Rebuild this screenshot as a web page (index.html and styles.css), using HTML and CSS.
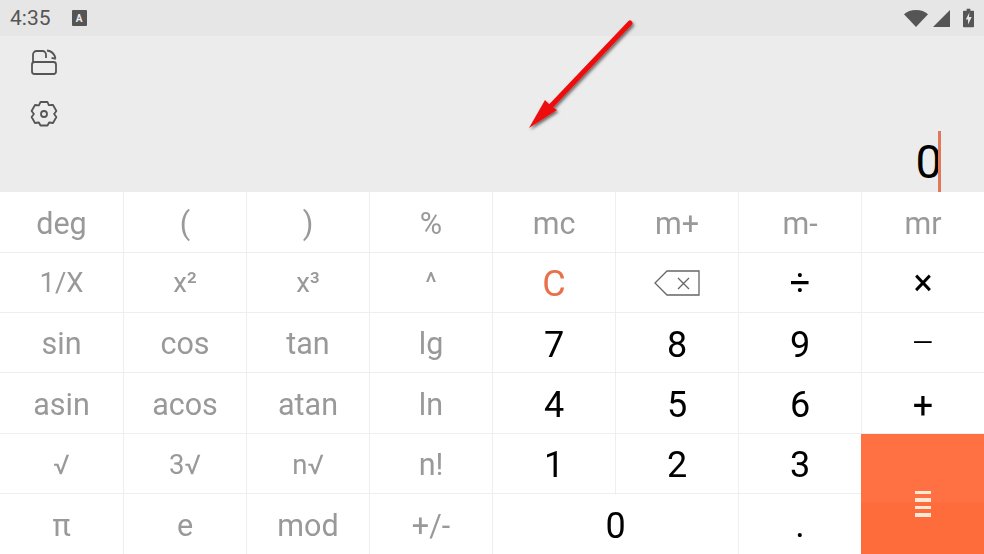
FILE: index.html
```html
<!DOCTYPE html>
<html lang="en">
<head>
<meta charset="utf-8">
<title>Calculator</title>
<link rel="stylesheet" href="styles.css">
</head>
<body>
<div class="app">
  <header class="status">
    <div class="status-left">
      <span class="time">4:35</span>
      <span class="a-badge">A</span>
    </div>
    <div class="status-right">
      <svg class="ic-wifi" viewBox="0 0 24 17"><path d="M0 4.2C3 1.6 7.200 0 12 0s9 1.600 12 4.200L12 17z"/></svg>
      <svg class="ic-signal" viewBox="0 0 17 17"><path d="M17 0v17H0z"/></svg>
      <svg class="ic-batt" viewBox="0 0 12 20"><path fill-rule="evenodd" d="M4 0h4v2h3a1 1 0 0 1 1 1v16a1 1 0 0 1-1 1H1a1 1 0 0 1-1-1V3a1 1 0 0 1 1-1h3zM7 4 3 11.500h2.500V17L9.500 9H6.500z"/></svg>
    </div>
  </header>
  <section class="display">
    <div class="tools">
      <svg class="tool" viewBox="0 0 28 28" fill="none" stroke="#555" stroke-width="1.800">
        <rect x="2" y="14" width="24" height="12" rx="2.500"/>
        <path d="M3 14V6.500A3.500 3.500 0 0 1 6.500 3h6A3.500 3.500 0 0 1 16 6.500V10"/>
        <path d="M17 2.500C21.500 3 24.500 6 25.500 10.500M25.800 10.800l-4.300-1"/>
      </svg>
      <svg class="tool" viewBox="0 0 28 28" fill="none" stroke="#555" stroke-width="1.800" stroke-linejoin="round">
        <path d="M10.500 2h7l1.300 3.200 3-.4 1.200.2 3.400 6-2.300 3 2.300 3-3.400 6-3.900-.5-1.600 3H10.500l-1.600-3-3.900.5-3.400-6L3.900 14 1.600 11l3.400-6 3.900.4z"/>
        <circle cx="14" cy="14" r="3"/>
      </svg>
    </div>
    <div class="readout"><span class="value">0</span><span class="caret"></span></div>
  </section>
  <main class="keys">
    <button class="key sci">deg</button><button class="key sci">(</button><button class="key sci">)</button><button class="key sci">%</button>
    <button class="key sci">mc</button><button class="key sci">m+</button><button class="key sci">m-</button><button class="key sci">mr</button>

    <button class="key sci sm flat">1/X</button><button class="key sci sm flat">x²</button><button class="key sci sm flat">x³</button><button class="key sci sm flat">^</button>
    <button class="key clear">C</button>
    <button class="key">
      <svg class="ic-back" viewBox="0 0 46 26" fill="none" stroke="#666" stroke-width="1.300"><path d="M45 1H13L1 13l12 12h32z"/><path d="M24 8l11 11M35 8 24 19"/></svg>
    </button>
    <button class="key op">÷</button><button class="key op">×</button>

    <button class="key sci">sin</button><button class="key sci">cos</button><button class="key sci">tan</button><button class="key sci">lg</button>
    <button class="key num low">7</button><button class="key num low">8</button><button class="key num low">9</button><button class="key op minus">–</button>

    <button class="key sci">asin</button><button class="key sci">acos</button><button class="key sci">atan</button><button class="key sci">ln</button>
    <button class="key num low">4</button><button class="key num low">5</button><button class="key num low">6</button><button class="key op plus">+</button>

    <button class="key sci sm">√</button><button class="key sci sm">3√</button><button class="key sci sm">n√</button><button class="key sci">n!</button>
    <button class="key num">1</button><button class="key num">2</button><button class="key num">3</button>
    <button class="key equals"><span class="bars"><i></i><i></i><i></i><i></i></span></button>

    <button class="key sci">π</button><button class="key sci">e</button><button class="key sci">mod</button><button class="key sci">+/-</button>
    <button class="key num low zero">0</button><button class="key num">.</button>
  </main>
  <svg class="arrow" viewBox="0 0 120 120">
    <defs>
      <filter id="sh" x="-20%" y="-20%" width="150%" height="150%"><feDropShadow dx="1.500" dy="2" stdDeviation="1.500" flood-color="#000" flood-opacity=".55"/></filter>
    </defs>
    <g filter="url(#sh)" fill="#ee1111">
      <path d="M110 8 31 91" stroke="#ee1111" stroke-width="5" stroke-linecap="round" fill="none"/>
      <path d="M9 113 25 85 31 91 37 95z"/>
    </g>
  </svg>
</div>
</body>
</html>
```
FILE: styles.css
```css
* { box-sizing: border-box; }
html, body { margin: 0; height: 100%; }
body { font-family: Roboto, "Liberation Sans", sans-serif; background: #fff; overflow: hidden; }
.app { position: relative; width: 984px; height: 554px; display: flex; flex-direction: column; }

.status { height: 36px; background: #e6e6e6; display: flex; justify-content: space-between; align-items: center; padding: 0 10px; }
.status-left { display: flex; align-items: center; gap: 21px; }
.time { font-size: 21px; color: #555; line-height: 36px; }
.a-badge { width: 15px; height: 16px; background: #555; color: #eee; font-size: 10px; font-weight: 700; border-radius: 1px; display: flex; align-items: center; justify-content: center; }
.status-right { display: flex; align-items: center; gap: 5px; margin-top: 1px; }
.ic-wifi { width: 24px; height: 17px; fill: #555; }
.ic-signal { width: 17px; height: 17px; fill: #555; margin-right: 8px; }
.ic-batt { width: 11px; height: 20px; fill: #555; margin-top: -1px; }

.display { height: 156px; background: #ececec; position: relative; display: flex; flex-direction: column; }
.tools { display: flex; flex-direction: column; gap: 24px; padding: 12px 0 0 30px; }
.tool { width: 28px; height: 28px; display: block; }
.readout { margin-top: auto; display: flex; justify-content: flex-end; align-items: flex-end; height: 61px; padding-right: 43px; }
.value { font-size: 47px; line-height: 61px; color: #000; margin-right: -4px; }
.caret { width: 3px; height: 61px; background: #e2785a; }

.keys { flex: 1; display: grid; grid-template-columns: repeat(8, 1fr); grid-template-rows: 61px 60px 60px 61px 60px 60px; }
.key { border: 0; border-left: 1px solid #eee; border-bottom: 1px solid #eee; background: #fff; padding: 0; font-family: inherit; font-size: 30.500px; color: #000; display: flex; align-items: center; justify-content: center; min-width: 0; min-height: 0; opacity: .999; }
.key:nth-child(8n+1) { border-left: 0; }
.key:nth-last-child(-n+6) { border-bottom: 0; }
.sci { color: #999; padding-top: 2px; }
.sci.flat { padding-top: 0; }
.sm { font-size: 27.500px; }
.num { font-size: 36px; padding-top: 2px; }
.num.low { padding-top: 4px; }
.op { font-size: 36px; font-weight: 400; }
.minus { font-weight: 300; }
.plus { padding-top: 5px; }
.clear { color: #e8704a; font-size: 36px; padding-top: 3px; }
.zero { grid-column: span 2; }
.equals { grid-column: 8; grid-row: 5 / span 2; background: linear-gradient(#ff7043 0 56%, #ff6c3b 58% 100%); border: 0; }
.bars { display: flex; flex-direction: column; gap: 4px; margin-top: 19px; }
.bars i { display: block; width: 16px; height: 3.500px; background: #ffe8d8; }
.ic-back { width: 46px; height: 26px; }
.arrow { position: absolute; left: 520px; top: 15px; width: 120px; height: 120px; overflow: visible; }
```
